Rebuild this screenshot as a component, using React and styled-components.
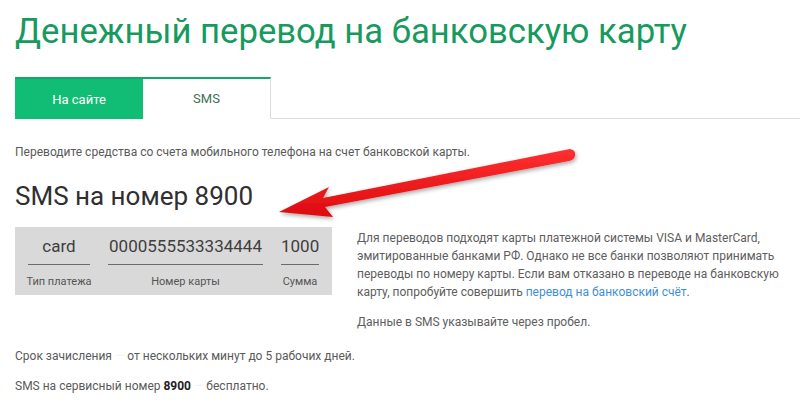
import React from 'react';
import styled, { createGlobalStyle } from 'styled-components';

const Global = createGlobalStyle`
  html, body {
    margin: 0;
    padding: 0;
    background: #fff;
  }
  body {
    font-family: Roboto, "Noto Sans", sans-serif;
    color: #555;
  }
`;

const Page = styled.div`
  position: relative;
  width: 800px;
  height: 410px;
  overflow: hidden;
  padding: 0 15px;
  box-sizing: border-box;
`;

const Title = styled.h1`
  margin: 9px 0 0;
  font-size: 34.7px;
  line-height: 44px;
  font-weight: 400;
  color: #169a5e;
`;

const Tabs = styled.div`
  display: flex;
  margin: 24px -15px 0 0;
  border-bottom: 1px solid #dcdcdc;
`;

const Tab = styled.div`
  width: 128px;
  height: 42px;
  display: flex;
  align-items: center;
  justify-content: center;
  font-size: 13px;
  box-sizing: border-box;
  margin-bottom: -1px;
  background: ${({ $active }) => ($active ? '#11bd75' : '#fff')};
  color: ${({ $active }) => ($active ? '#fff' : '#3d7257')};
  border-top: 2px solid #11a86a;
  border-right: ${({ $active }) => ($active ? 'none' : '1px solid #dcdcdc')};
  border-bottom: ${({ $active }) => ($active ? 'none' : '1px solid #fff')};
`;

const Lead = styled.p`
  margin: 24px 0 0;
  font-size: 12px;
  line-height: 18px;
  color: #5a5a5a;
`;

const Subtitle = styled.h2`
  margin: 19px 0 0;
  font-size: 26px;
  line-height: 32px;
  font-weight: 400;
  color: #2f2f2f;
`;

const Row = styled.div`
  display: flex;
  gap: 25px;
  margin-top: 15px;
  align-items: flex-start;
`;

const SmsBox = styled.div`
  display: flex;
  gap: 18px;
  background: #d9d9d9;
  width: 317px;
  height: 68px;
  box-sizing: border-box;
  padding: 7px 13px 0;
`;

const Field = styled.div`
  width: ${({ $w }) => $w}px;
  display: flex;
  flex-direction: column;
  align-items: center;
`;

const Value = styled.div`
  width: 100%;
  text-align: center;
  font-size: 17px;
  line-height: 24px;
  color: #3e3e3e;
  padding-bottom: 6px;
  border-bottom: 1px solid #6b6b6b;
  white-space: nowrap;
`;

const Label = styled.div`
  margin-top: 10px;
  font-size: 11px;
  line-height: 14px;
  color: #555;
  white-space: nowrap;
`;

const Side = styled.div`
  width: 430px;
  padding-top: 2px;
`;

const Para = styled.p`
  margin: 0 0 ${({ $gap }) => $gap || 0}px;
  font-size: 12px;
  line-height: 18px;
  color: #5e5e5e;
`;

const Link = styled.a`
  color: #3f8fd6;
  text-decoration: none;
`;

const Note = styled.p`
  margin: ${({ $top }) => $top}px 0 0;
  font-size: 12px;
  line-height: 18px;
  color: #5a5a5a;

  b {
    color: #222;
    font-weight: 700;
  }
`;

const Dash = styled.span`
  color: #f2f2f2;
`;

const ArrowSvg = styled.svg`
  position: absolute;
  left: 0;
  top: 0;
  pointer-events: none;
`;

const Arrow = () => (
  <ArrowSvg width="800" height="410" viewBox="0 0 800 410">
    <defs>
      <filter id="sh" x="-10%" y="-30%" width="120%" height="160%">
        <feDropShadow dx="1" dy="2" stdDeviation="2" floodColor="#000" floodOpacity="0.35" />
      </filter>
      <linearGradient id="rg" x1="0" y1="0" x2="0" y2="1">
        <stop offset="0" stopColor="#ff3030" />
        <stop offset="1" stopColor="#dd0a0e" />
      </linearGradient>
    </defs>
    <path
      filter="url(#sh)"
      fill="url(#rg)"
      d="M279 212 L329 187 L323 198 L570 149 Q576 150 575 156 Q574 160 569 161 L325 207 L333 217 Z"
    />
  </ArrowSvg>
);

export default function App() {
  return (
    <>
      <Global />
      <Page>
        <Title>Денежный перевод на банковскую карту</Title>
        <Tabs>
          <Tab $active>На сайте</Tab>
          <Tab>SMS</Tab>
        </Tabs>
        <Lead>Переводите средства со счета мобильного телефона на счет банковской карты.</Lead>
        <Subtitle>SMS на номер 8900</Subtitle>
        <Row>
          <SmsBox>
            <Field $w={62}>
              <Value>card</Value>
              <Label>Тип платежа</Label>
            </Field>
            <Field $w={155}>
              <Value>0000555533334444</Value>
              <Label>Номер карты</Label>
            </Field>
            <Field $w={38}>
              <Value>1000</Value>
              <Label>Сумма</Label>
            </Field>
          </SmsBox>
          <Side>
            <Para $gap={12}>
              Для переводов подходят карты платежной системы VISA и MasterCard,
              эмитированные банками РФ. Однако не все банки позволяют принимать
              переводы по номеру карты. Если вам отказано в переводе на банковскую
              карту, попробуйте совершить <Link href="#">перевод на банковский счёт</Link>.
            </Para>
            <Para>Данные в SMS указывайте через пробел.</Para>
          </Side>
        </Row>
        <Note $top={16}>
          Срок зачисления <Dash>—</Dash> от нескольких минут до 5 рабочих дней.
        </Note>
        <Note $top={12}>
          SMS на сервисный номер <b>8900</b> <Dash>—</Dash> бесплатно.
        </Note>
        <Arrow />
      </Page>
    </>
  );
}
